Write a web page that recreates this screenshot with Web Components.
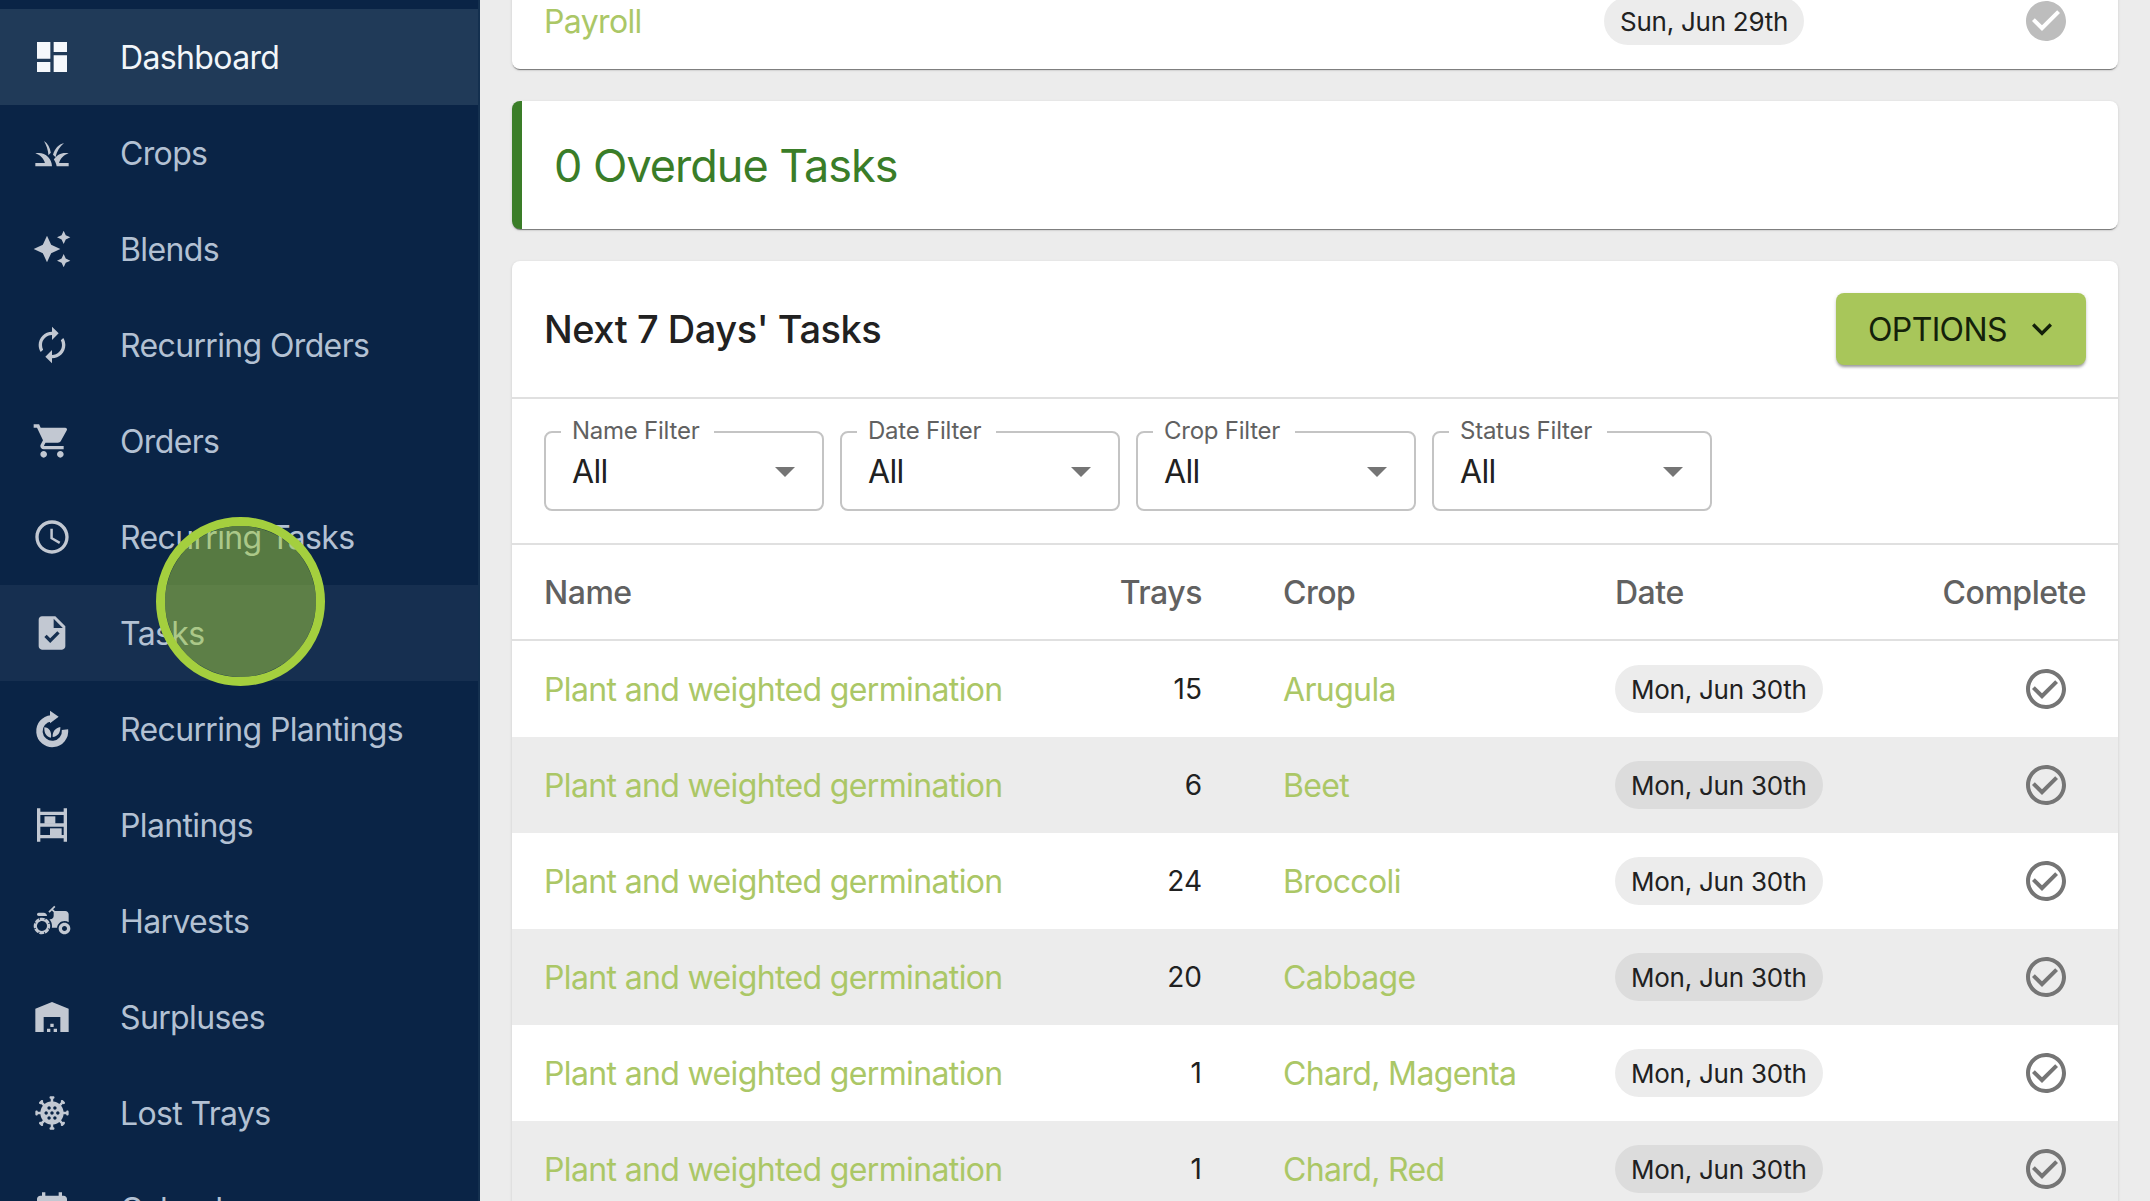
<!DOCTYPE html>
<html>
<head>
<meta charset="utf-8">
<title>Tasks</title>
<style>
  html, body { margin: 0; height: 100%; overflow: hidden; background: #ececec; }
  body { font-family: Inter, "Liberation Sans", sans-serif; }
</style>
</head>
<body>
<app-shell>
  <side-nav slot="nav">
    <nav-item icon="dashboard" selected>Dashboard</nav-item>
    <nav-item icon="grass">Crops</nav-item>
    <nav-item icon="sparkle">Blends</nav-item>
    <nav-item icon="renew">Recurring Orders</nav-item>
    <nav-item icon="cart">Orders</nav-item>
    <nav-item icon="clock">Recurring Tasks</nav-item>
    <nav-item icon="task" hovered>Tasks</nav-item>
    <nav-item icon="sprout">Recurring Plantings</nav-item>
    <nav-item icon="shelves">Plantings</nav-item>
    <nav-item icon="tractor">Harvests</nav-item>
    <nav-item icon="warehouse">Surpluses</nav-item>
    <nav-item icon="virus">Lost Trays</nav-item>
    <nav-item icon="calendar">Calendar</nav-item>
  </side-nav>

  <paper-card id="payroll">
    <task-row name="Payroll" date="Sun, Jun 29th" done style="--date-col: 402px"></task-row>
  </paper-card>

  <overdue-banner>0 Overdue Tasks</overdue-banner>

  <paper-card>
    <card-header>
      Next 7 Days' Tasks
      <options-button slot="action">OPTIONS</options-button>
    </card-header>
    <filter-bar>
      <filter-select label="Name Filter">All</filter-select>
      <filter-select label="Date Filter">All</filter-select>
      <filter-select label="Crop Filter">All</filter-select>
      <filter-select label="Status Filter">All</filter-select>
    </filter-bar>
    <table-head></table-head>
    <task-row name="Plant and weighted germination" trays="15" crop="Arugula" date="Mon, Jun 30th"></task-row>
    <task-row striped name="Plant and weighted germination" trays="6" crop="Beet" date="Mon, Jun 30th"></task-row>
    <task-row name="Plant and weighted germination" trays="24" crop="Broccoli" date="Mon, Jun 30th"></task-row>
    <task-row striped name="Plant and weighted germination" trays="20" crop="Cabbage" date="Mon, Jun 30th"></task-row>
    <task-row name="Plant and weighted germination" trays="1" crop="Chard, Magenta" date="Mon, Jun 30th"></task-row>
    <task-row striped name="Plant and weighted germination" trays="1" crop="Chard, Red" date="Mon, Jun 30th"></task-row>
  </paper-card>

  <click-marker slot="overlay"></click-marker>
</app-shell>

<script>
const ICONS = {
  dashboard: '<path d="M3 13h8V3H3v10zm0 8h8v-6H3v6zm10 0h8V11h-8v10zm0-18v6h8V3h-8z"/>',
  grass: '<path d="M12 20H2v-2h5.75C7.02 15.19 4.81 12.99 2 12.26 2.64 12.1 3.31 12 4 12c4.42 0 8 3.58 8 8zM22 12.26c-.64-.16-1.31-.26-2-.26-2.94 0-5.5 1.59-6.9 3.95.43.6.79 1.25 1.07 1.94.28.67.5 1.39.63 2.11H22v-2h-5.75c.73-2.81 2.94-5.01 5.75-5.74z"/><path d="M7.2 4.800c2.200 1.500 3.600 3.700 4.100 7.100-.6.5-1 .9-1.400 1.400-.3-3.300-1.300-6-2.700-8.500zM19.200 6c-3.300.8-5.500 3.300-6.600 7.100.5.5 1.100 1 1.500 1.500.8-3.500 2.500-6.500 5.100-8.600z"/>',
  sparkle: '<path d="m19 9 1.25-2.75L23 5l-2.75-1.25L19 1l-1.25 2.75L15 5l2.75 1.25L19 9zm-7.5.5L9 4 6.5 9.5 1 12l5.500 2.500L9 20l2.500-5.500L17 12l-5.500-2.500zM19 15l-1.250 2.750L15 19l2.750 1.250L19 23l1.250-2.750L23 19l-2.750-1.250L19 15z"/>',
  renew: '<path d="M12 6v3l4-4-4-4v3c-4.42 0-8 3.58-8 8 0 1.57.46 3.03 1.24 4.26L6.7 14.8c-.45-.83-.7-1.79-.7-2.8 0-3.31 2.69-6 6-6zm6.76 1.74L17.3 9.2c.44.84.7 1.79.7 2.8 0 3.31-2.69 6-6 6v-3l-4 4 4 4v-3c4.42 0 8-3.58 8-8 0-1.57-.46-3.03-1.24-4.26z"/>',
  cart: '<path d="M7 18c-1.1 0-1.99.9-1.99 2S5.9 22 7 22s2-.9 2-2-.9-2-2-2zM1 2v2h2l3.6 7.59-1.35 2.45c-.16.28-.25.61-.25.96 0 1.1.9 2 2 2h12v-2H7.42c-.14 0-.25-.11-.25-.25l.03-.12.9-1.63h7.45c.75 0 1.41-.41 1.75-1.03l3.58-6.49c.08-.14.12-.31.12-.48 0-.55-.45-1-1-1H5.21l-.94-2H1zm16 16c-1.1 0-1.99.9-1.99 2s.89 2 1.99 2 2-.9 2-2-.9-2-2-2z"/>',
  clock: '<path d="M11.99 2C6.47 2 2 6.48 2 12s4.47 10 9.99 10C17.52 22 22 17.52 22 12S17.52 2 11.99 2zM12 20c-4.42 0-8-3.58-8-8s3.58-8 8-8 8 3.58 8 8-3.58 8-8 8z"/><path d="M12.5 7H11v6l5.25 3.15.75-1.23-4.5-2.67z"/>',
  task: '<path d="M14 2H6c-1.1 0-1.99.9-1.99 2L4 20c0 1.1.89 2 1.99 2H18c1.1 0 2-.9 2-2V8l-6-6zm-3.06 16L7.4 14.46l1.41-1.41 2.12 2.12 4.24-4.24 1.41 1.41L10.94 18zM13 9V3.5L18.5 9H13z"/>',
  sprout: '<path d="M19.800 12.400A7.700 7.700 0 1 1 11.500 5.600" fill="none" stroke="currentColor" stroke-width="3.800"/><path d="M10.800 1l5.200 3.700-5.200 3.800z"/><path d="M11.400 17.200c-2.800-.3-4.200-2.800-4-6.200 2.800.1 4.600 2.500 4 6.200zM12.400 16.800c-.2-3.200 1.600-5.400 4.600-6 .2 3.300-1.600 5.700-4.600 6z"/>',
  shelves: '<path d="M3 2h2v2h14V2h2v20h-2v-2H5v2H3V2zm2 4v5h14V6H5zm0 7v5h14v-5H5z" fill-rule="evenodd"/><rect x="7.500" y="6.800" width="6.500" height="4.500"/><rect x="10.800" y="14" width="7" height="4.500"/>',
  tractor: '<path d="M19.5 12c.93 0 1.78.28 2.5.76V8c0-1.100-.9-2-2-2h-6.290l-1.060-1.060 1.410-1.410-.71-.71-3.530 3.530.71.710 1.410-1.410L13 6.710V9c0 1.100-.9 2-2 2h-.54c.95 1.060 1.540 2.460 1.540 4 0 .34-.04.67-.09 1h3.140c.25-2.250 2.140-4 4.450-4z"/><path fill-rule="evenodd" d="M19.500 13c-1.930 0-3.500 1.570-3.500 3.500s1.570 3.500 3.500 3.500 3.500-1.570 3.500-3.500-1.570-3.500-3.500-3.500zm0 5c-.83 0-1.500-.67-1.500-1.500s.67-1.500 1.500-1.500 1.500.67 1.500 1.500-.67 1.500-1.500 1.500z"/><path d="M4 9h5c0-1.100-.9-2-2-2H4c-.55 0-1 .45-1 1s.45 1 1 1z"/><path fill-rule="evenodd" d="M9.830 13.820l-.18-.47.93-.35c-.46-1.060-1.280-1.910-2.310-2.430l-.4.89-.46-.21.4-.9c-.55-.21-1.140-.35-1.760-.35-.53 0-1.040.11-1.520.26l.34.91-.47.18-.34-.95c-1.060.46-1.910 1.280-2.430 2.310l.89.4-.21.46-.9-.4C1.140 13.720 1 14.310 1 14.930c0 .53.11 1.040.26 1.520l.91-.34.18.47-.93.35c.46 1.060 1.280 1.910 2.310 2.430l.4-.89.46.21-.4.9c.55.21 1.140.35 1.760.35.53 0 1.040-.11 1.520-.26l-.34-.91.47-.18.35.93c1.060-.46 1.910-1.280 2.430-2.310l-.89-.4.21-.46.9.4c.21-.55.35-1.140.35-1.760 0-.53-.11-1.040-.26-1.520l-.91.34zM7.150 17.770c-1.530.63-3.290-.09-3.920-1.620-.63-1.530.09-3.290 1.620-3.920 1.530-.63 3.290.09 3.920 1.620.63 1.530-.09 3.290-1.620 3.920z"/>',
  warehouse: '<path d="M22 21V7L12 3 2 7v14h5v-9h10v9h5zm-11-2H9v2h2v-2zm2-3h-2v2h2v-2zm2 3h-2v2h2v-2z"/>',
  virus: '<path fill-rule="evenodd" d="M21.250 10.500c-.41 0-.75.34-.75.75h-1.540c-.15-1.370-.69-2.630-1.520-3.650l1.090-1.090.01.01c.29.29.77.29 1.060 0s.29-.77 0-1.060L18.540 4.400c-.29-.29-.77-.29-1.060 0-.29.29-.29.76-.01 1.050l-1.090 1.090c-1.020-.82-2.270-1.360-3.640-1.510V3.500h.01c.41 0 .75-.34.75-.75S13.160 2 12.750 2h-1.500c-.41 0-.75.34-.75.75s.33.74.74.75v1.550c-1.370.15-2.620.69-3.640 1.510L6.510 5.470l.01-.01c.29-.29.29-.77 0-1.060-.29-.29-.77-.29-1.060 0L4.400 5.460c-.29.29-.29.77 0 1.060.29.29.76.29 1.050.01l1.090 1.090c-.82 1.020-1.360 2.260-1.500 3.630H3.500c0-.41-.34-.75-.75-.75S2 10.840 2 11.250v1.500c0 .41.34.75.75.75s.75-.34.75-.75h1.540c.15 1.370.69 2.610 1.500 3.630l-1.090 1.090c-.29-.29-.76-.28-1.050.01-.29.29-.29.77 0 1.060l1.060 1.060c.29.29.77.29 1.060 0 .29-.29.29-.77 0-1.060l-.01-.01 1.090-1.090c1.020.82 2.260 1.360 3.630 1.510v1.550c-.41.01-.74.34-.74.75s.34.75.75.75h1.500c.41 0 .75-.34.75-.75s-.34-.75-.75-.75h-.01v-1.540c1.370-.14 2.620-.69 3.640-1.510l1.090 1.090c-.29.29-.28.76.01 1.050.29.29.77.29 1.060 0l1.060-1.060c.29-.29.29-.77 0-1.060-.29-.29-.77-.29-1.060 0l-.01.01-1.090-1.090c.82-1.020 1.370-2.270 1.520-3.650h1.540c0 .41.34.75.75.75s.75-.34.75-.75v-1.500c.01-.41-.33-.75-.74-.75zM13.750 8c.55 0 1 .45 1 1s-.45 1-1 1-1-.45-1-1 .45-1 1-1zM12 13c-.55 0-1-.45-1-1s.45-1 1-1 1 .45 1 1-.45 1-1 1zm-1.750-5c.55 0 1 .45 1 1s-.45 1-1 1-1-.45-1-1 .45-1 1-1zM8.500 13c-.55 0-1-.45-1-1s.45-1 1-1 1 .45 1 1-.45 1-1 1zm1.750 3c-.55 0-1-.45-1-1s.45-1 1-1 1 .45 1 1-.45 1-1 1zm3.500 0c-.55 0-1-.45-1-1s.45-1 1-1 1 .45 1 1-.45 1-1 1zm.75-4c0-.55.45-1 1-1s1 .45 1 1-.45 1-1 1-1-.45-1-1z"/>',
  calendar: '<path d="M19 4h-1V2h-2v2H8V2H6v2H5c-1.110 0-2 .9-2 2v14c0 1.100.89 2 2 2h14c1.100 0 2-.9 2-2V6c0-1.100-.9-2-2-2zm0 16H5V10h14v10z"/>',
  check: '<path d="M16.590 7.580 10 14.170l-3.590-3.580L5 12l5 5 8-8zM12 2C6.480 2 2 6.480 2 12s4.480 10 10 10 10-4.480 10-10S17.520 2 12 2zm0 18c-4.420 0-8-3.580-8-8s3.580-8 8-8 8 3.580 8 8-3.580 8-8 8z"/>',
  checkFilled: '<path d="M12 2C6.480 2 2 6.480 2 12s4.480 10 10 10 10-4.480 10-10S17.520 2 12 2zm-2 15-5-5 1.410-1.410L10 14.170l7.590-7.590L19 8l-9 9z"/>',
  arrowDown: '<path d="M7 10l5 5 5-5z"/>',
  chevron: '<path d="M16.590 8.590 12 13.170 7.410 8.590 6 10l6 6 6-6z"/>'
};

function svgIcon(name, size) {
  return `<svg width="${size}" height="${size}" viewBox="0 0 24 24" fill="currentColor">${ICONS[name]}</svg>`;
}

class AppShell extends HTMLElement {
  constructor() {
    super();
    this.attachShadow({ mode: "open" });
    this.shadowRoot.innerHTML = `
      <style>
        :host { display: flex; position: relative; width: 2150px; height: 1201px; overflow: hidden; }
        main {
          flex: 1; min-width: 0;
          display: flex; flex-direction: column; gap: 32px;
          padding: 0 32px;
          margin-top: -27px;
        }
      </style>
      <slot name="nav"></slot>
      <main><slot></slot></main>
      <slot name="overlay"></slot>
    `;
  }
}

class SideNav extends HTMLElement {
  constructor() {
    super();
    this.attachShadow({ mode: "open" });
    this.shadowRoot.innerHTML = `
      <style>
        :host {
          display: block; flex: none;
          width: 480px; height: 1201px;
          box-sizing: border-box;
          padding-top: 9px;
          background: #0a2446;
          border-right: 2px solid #14304f;
          overflow: hidden;
        }
      </style>
      <slot></slot>
    `;
  }
}

class NavItem extends HTMLElement {
  constructor() {
    super();
    this.attachShadow({ mode: "open" });
    this.shadowRoot.innerHTML = `
      <style>
        :host {
          display: flex; align-items: center;
          height: 96px;
          color: #b3c1d3;
          font-size: 32px;
          letter-spacing: -0.02em;
        }
        :host([selected]) { background: #203a58; color: #f2f6fa; }
        :host([hovered]) { background: #162f50; }
        .icon { width: 40px; height: 40px; margin: 0 48px 0 32px; color: #c2c8d2; }
        :host([selected]) .icon { color: #f5f8fc; }
        svg { display: block; }
      </style>
      <span class="icon"></span>
      <slot></slot>
    `;
    this.shadowRoot.querySelector(".icon").innerHTML = svgIcon(this.getAttribute("icon"), 40);
  }
}

class PaperCard extends HTMLElement {
  constructor() {
    super();
    this.attachShadow({ mode: "open" });
    this.shadowRoot.innerHTML = `
      <style>
        :host {
          display: block; flex: none;
          background: #fff;
          border-radius: 8px;
          overflow: hidden;
          box-shadow: 0 2px 1px -1px rgba(0,0,0,.45), 0 1px 3px rgba(0,0,0,.15);
        }
      </style>
      <slot></slot>
    `;
  }
}

class OverdueBanner extends HTMLElement {
  constructor() {
    super();
    this.attachShadow({ mode: "open" });
    this.shadowRoot.innerHTML = `
      <style>
        :host {
          display: flex; align-items: center; flex: none;
          height: 128px;
          box-sizing: border-box;
          padding: 1px 0 0 32px;
          background: #fff;
          border-left: 10px solid #3a7d28;
          border-radius: 8px;
          color: #3a7d28;
          font-size: 45px;
          letter-spacing: -1px;
          box-shadow: 0 2px 1px -1px rgba(0,0,0,.45), 0 1px 3px rgba(0,0,0,.15);
        }
      </style>
      <slot></slot>
    `;
  }
}

class CardHeader extends HTMLElement {
  constructor() {
    super();
    this.attachShadow({ mode: "open" });
    this.shadowRoot.innerHTML = `
      <style>
        :host {
          display: flex; align-items: center; justify-content: space-between;
          height: 138px;
          box-sizing: border-box;
          padding: 0 32px;
          border-bottom: 2px solid #e0e0e0;
          color: #212121;
          font-size: 38px;
          letter-spacing: -0.45px;
          font-weight: 500;
        }
      </style>
      <slot></slot>
      <slot name="action"></slot>
    `;
  }
}

class OptionsButton extends HTMLElement {
  constructor() {
    super();
    this.attachShadow({ mode: "open" });
    this.shadowRoot.innerHTML = `
      <style>
        :host {
          display: flex; align-items: center;
          width: 250px; height: 72px;
          box-sizing: border-box;
          padding-left: 32px;
          background: #a8c65a;
          border-radius: 8px;
          color: #14210a;
          font-size: 32px;
          letter-spacing: -0.02em;
          font-weight: 400;
          box-shadow: 0 3px 3px -1px rgba(0,0,0,.35), 0 1px 4px rgba(0,0,0,.12);
        }
        svg { display: block; margin-left: 15px; }
      </style>
      <slot></slot>${svgIcon("chevron", 40)}
    `;
  }
}

class FilterBar extends HTMLElement {
  constructor() {
    super();
    this.attachShadow({ mode: "open" });
    this.shadowRoot.innerHTML = `
      <style>
        :host {
          display: flex; gap: 16px;
          height: 146px;
          box-sizing: border-box;
          padding: 32px 32px 0;
          border-bottom: 2px solid #e0e0e0;
        }
      </style>
      <slot></slot>
    `;
  }
}

class FilterSelect extends HTMLElement {
  constructor() {
    super();
    this.attachShadow({ mode: "open" });
    this.shadowRoot.innerHTML = `
      <style>
        :host {
          display: flex; align-items: center; justify-content: space-between;
          position: relative;
          width: 280px; height: 80px;
          box-sizing: border-box;
          padding: 0 13px 0 26px;
          border: 2px solid #c4c4c4;
          border-radius: 8px;
          color: #212121;
          font-size: 32px;
          letter-spacing: -0.02em;
        }
        .label {
          position: absolute; left: 15px; top: -16px;
          padding: 0 15px 0 11px;
          background: #fff;
          color: #616161;
          font-size: 24px;
          letter-spacing: -0.01em;
          line-height: 28px;
        }
        svg { display: block; color: #757575; }
      </style>
      <span class="label"></span>
      <slot></slot>${svgIcon("arrowDown", 48)}
    `;
    this.shadowRoot.querySelector(".label").textContent = this.getAttribute("label");
  }
}

class TableHead extends HTMLElement {
  constructor() {
    super();
    this.attachShadow({ mode: "open" });
    this.shadowRoot.innerHTML = `
      <style>
        :host {
          display: grid;
          grid-template-columns: 501px 157px 413px 1fr auto;
          align-items: center;
          height: 96px;
          box-sizing: border-box;
          padding: 0 32px;
          border-bottom: 2px solid #e0e0e0;
          color: #616161;
          font-size: 32px;
          font-weight: 500;
          letter-spacing: -0.015em;
        }
        .r { text-align: right; }
        .crop { padding-left: 81px; }
      </style>
      <span>Name</span>
      <span class="r">Trays</span>
      <span class="crop">Crop</span>
      <span>Date</span>
      <span>Complete</span>
    `;
  }
}

class DatePill extends HTMLElement {
  constructor() {
    super();
    this.attachShadow({ mode: "open" });
    this.shadowRoot.innerHTML = `
      <style>
        :host {
          display: inline-flex; align-items: center;
          height: 48px;
          padding: 0 16px;
          border-radius: 24px;
          background: var(--pill-bg, #ececec);
          color: #212121;
          font-size: 26px;
          letter-spacing: -0.25px;
          white-space: nowrap;
        }
      </style>
      <slot></slot>
    `;
  }
}

class TaskRow extends HTMLElement {
  constructor() {
    super();
    this.attachShadow({ mode: "open" });
    const done = this.hasAttribute("done");
    this.shadowRoot.innerHTML = `
      <style>
        :host {
          display: grid;
          grid-template-columns: 501px 157px var(--date-col, 413px) 1fr auto;
          align-items: center;
          height: 96px;
          box-sizing: border-box;
          padding: 0 32px;
          font-size: 32px;
          letter-spacing: -0.02em;
          color: #abc766;
        }
        :host([striped]) { background: #ececec; --pill-bg: #dcdcdc; }
        .trays { text-align: right; color: #212121; font-size: 28px; letter-spacing: 0; }
        .crop { padding-left: 81px; }
        .check { display: block; margin-right: 16px; color: #757575; }
        .check.done { color: #bdbdbd; }
        svg { display: block; }
      </style>
      <span class="name"></span>
      <span class="trays"></span>
      <span class="crop"></span>
      <span><date-pill></date-pill></span>
      <span class="check ${done ? "done" : ""}">${svgIcon(done ? "checkFilled" : "check", 48)}</span>
    `;
    this.shadowRoot.querySelector(".name").textContent = this.getAttribute("name");
    this.shadowRoot.querySelector(".trays").textContent = this.getAttribute("trays") || "";
    this.shadowRoot.querySelector(".crop").textContent = this.getAttribute("crop") || "";
    this.shadowRoot.querySelector("date-pill").textContent = this.getAttribute("date");
  }
}

class ClickMarker extends HTMLElement {
  constructor() {
    super();
    this.attachShadow({ mode: "open" });
    this.shadowRoot.innerHTML = `
      <style>
        :host {
          display: block;
          position: absolute; left: 156px; top: 517px;
          width: 169px; height: 169px;
          box-sizing: border-box;
          border-radius: 50%;
          border: 9px solid #a4cf3e;
          background: rgba(164,207,62,.5);
          background-clip: padding-box;
        }
      </style>
    `;
  }
}

customElements.define("app-shell", AppShell);
customElements.define("side-nav", SideNav);
customElements.define("nav-item", NavItem);
customElements.define("paper-card", PaperCard);
customElements.define("overdue-banner", OverdueBanner);
customElements.define("card-header", CardHeader);
customElements.define("options-button", OptionsButton);
customElements.define("filter-bar", FilterBar);
customElements.define("filter-select", FilterSelect);
customElements.define("table-head", TableHead);
customElements.define("date-pill", DatePill);
customElements.define("task-row", TaskRow);
customElements.define("click-marker", ClickMarker);
</script>
</body>
</html>
